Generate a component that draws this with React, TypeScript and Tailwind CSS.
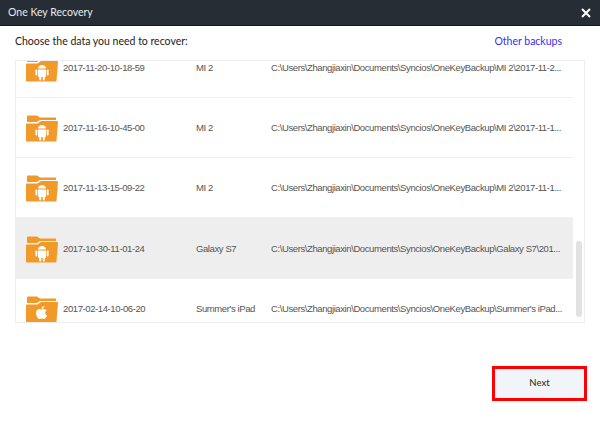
import { FaApple } from "react-icons/fa";

const rows = [
  { date: "2017-11-20-10-18-59", device: "MI 2", path: "C:\\Users\\Zhangjiaxin\\Documents\\Syncios\\OneKeyBackup\\MI 2\\2017-11-2...", os: "android" },
  { date: "2017-11-16-10-45-00", device: "MI 2", path: "C:\\Users\\Zhangjiaxin\\Documents\\Syncios\\OneKeyBackup\\MI 2\\2017-11-1...", os: "android" },
  { date: "2017-11-13-15-09-22", device: "MI 2", path: "C:\\Users\\Zhangjiaxin\\Documents\\Syncios\\OneKeyBackup\\MI 2\\2017-11-1...", os: "android" },
  { date: "2017-10-30-11-01-24", device: "Galaxy S7", path: "C:\\Users\\Zhangjiaxin\\Documents\\Syncios\\OneKeyBackup\\Galaxy S7\\201...", os: "android", selected: true },
  { date: "2017-02-14-10-06-20", device: "Summer's iPad", path: "C:\\Users\\Zhangjiaxin\\Documents\\Syncios\\OneKeyBackup\\Summer's iPad...", os: "apple" },
];

function Android() {
  return (
    <svg width="14" height="17" viewBox="0 0 14 17" fill="#fff" className="block">
      <path d="M3 4.6C3 2.4 4.8 1 7 1s4 1.4 4 3.6Z" />
      <rect x="3" y="5.4" width="8" height="7.6" rx="0.8" />
      <rect x="0.4" y="5.4" width="1.9" height="6" rx="0.95" />
      <rect x="11.7" y="5.4" width="1.9" height="6" rx="0.95" />
      <rect x="4.2" y="12" width="2" height="4.6" rx="1" />
      <rect x="7.8" y="12" width="2" height="4.6" rx="1" />
    </svg>
  );
}

function Folder({ os }: { os: string }) {
  return (
    <div className="relative w-[33px] h-[27px] shrink-0">
      <svg width="33" height="27" viewBox="0 0 33 27" className="block">
        <path d="M2 1.5Q2 0.5 3 0.5H12L15 2.5H31V5H15L12 7H2Z" fill="#f19a2a" />
        <path d="M1 9.5Q1 8.5 2 8.5H12.5L16 6H32Q33 6 33 7L31.5 25.5Q31.5 26.5 30.5 26.5H2Q1 26.5 1 25.5Z" fill="#f19a2a" />
      </svg>
      <div className="absolute left-0 right-0 top-[9px] flex justify-center text-white">
        {os === "apple" ? <FaApple size={15} /> : <Android />}
      </div>
    </div>
  );
}

export default function App() {
  return (
    <div className="w-[600px] h-[435px] bg-white overflow-hidden flex flex-col font-['Lato',sans-serif]">
      <div className="h-[26px] shrink-0 bg-[#262d35] border-b border-b-[#15191e] flex items-center justify-between pl-2 pr-[9px] text-white">
        <span className="text-[10.5px] text-[#e8eaec]">One Key Recovery</span>
        <svg width="10" height="10" viewBox="0 0 10 10">
          <path d="M1 1L9 9M9 1L1 9" stroke="#fff" strokeWidth="2" />
        </svg>
      </div>

      <div className="flex items-center justify-between pl-[15px] pr-[38px] h-[34px] pb-[3px] shrink-0">
        <span className="text-[10.5px] text-[#222]">Choose the data you need to recover:</span>
        <span className="text-[10.5px] text-[#3a2cff]">Other backups</span>
      </div>

      <div className="relative ml-[15px] w-[570px] h-[263px] border border-[#eeeeee] overflow-hidden shrink-0">
        <div className="-mt-[23px] w-[557px]">
          {rows.map((r) => (
            <div
              key={r.date}
              className={`flex items-center pl-[9px] pt-[2px] border-b border-b-[#f0f0f0] font-['Liberation_Sans',sans-serif] text-[9.5px] tracking-[-0.4px] text-[#555] ${r.selected ? "bg-[#eeeeee] h-[61px]" : "h-[60px]"}`}
            >
              <Folder os={r.os} />
              <span className="ml-[5px] w-[133px] shrink-0">{r.date}</span>
              <span className="w-[75px] shrink-0">{r.device}</span>
              <span className="whitespace-nowrap">{r.path}</span>
            </div>
          ))}
        </div>
        <div className="absolute left-[560px] top-[180px] w-[6px] h-[76px] rounded-[3px] bg-[#e0e2e4]" />
      </div>

      <div className="flex justify-end pr-[13px] mt-[43px]">
        <button className="w-[95px] h-[35px] border-[3px] border-[#ff0000] bg-[#f1f5fa] text-[9.5px] font-medium text-[#333]">
          Next
        </button>
      </div>
    </div>
  );
}
